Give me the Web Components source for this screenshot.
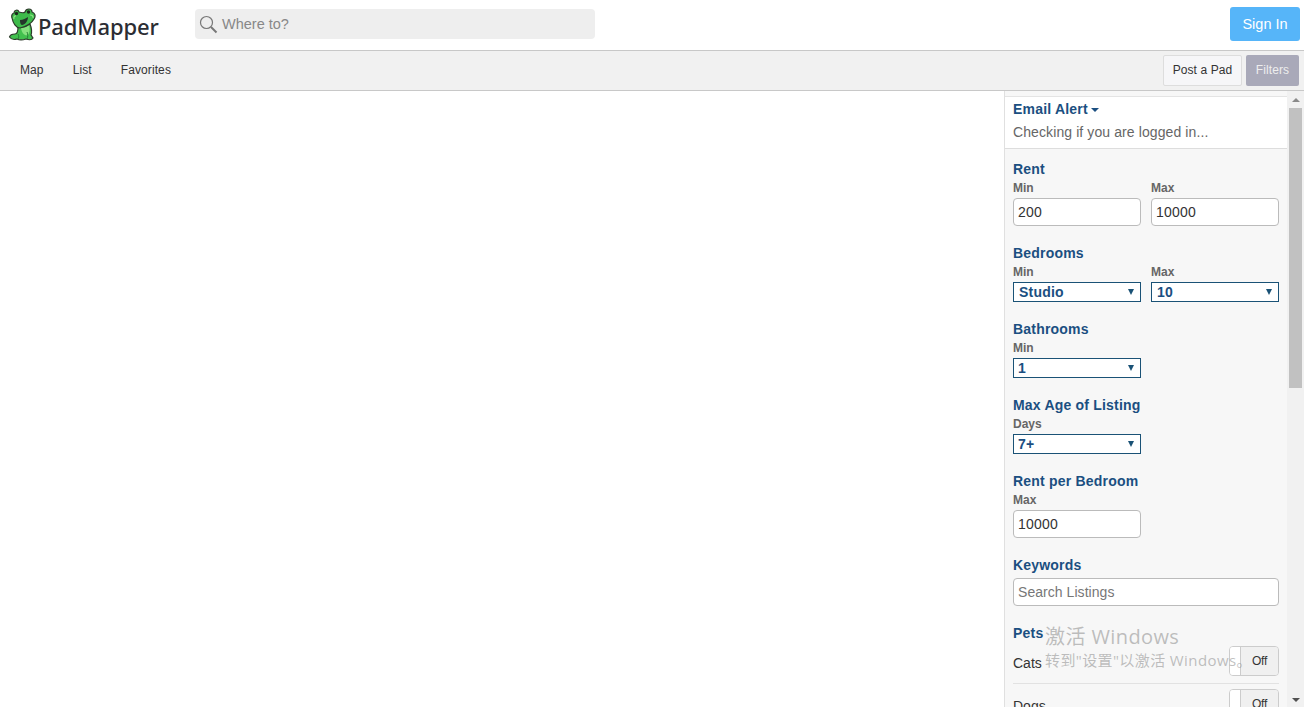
<!DOCTYPE html>
<html lang="en">
<head>
<meta charset="utf-8">
<title>PadMapper</title>
<style>
  html, body { margin: 0; height: 707px; overflow: hidden; background: #fff; font-family: "Liberation Sans", Arial, sans-serif; }
  body { display: flex; flex-direction: column; }
</style>
</head>
<body>
<pm-header></pm-header>
<pm-subnav></pm-subnav>
<pm-main>
  <pm-filters>
    <pm-alert></pm-alert>
    <pm-section heading="Rent">
      <pm-field label="Min"><pm-text value="200"></pm-text></pm-field>
      <pm-field label="Max"><pm-text value="10000"></pm-text></pm-field>
    </pm-section>
    <pm-section heading="Bedrooms">
      <pm-field label="Min"><pm-select value="Studio" wide></pm-select></pm-field>
      <pm-field label="Max"><pm-select value="10" wide></pm-select></pm-field>
    </pm-section>
    <pm-section heading="Bathrooms">
      <pm-field label="Min"><pm-select value="1"></pm-select></pm-field>
    </pm-section>
    <pm-section heading="Max Age of Listing">
      <pm-field label="Days"><pm-select value="7+"></pm-select></pm-field>
    </pm-section>
    <pm-section heading="Rent per Bedroom">
      <pm-field label="Max"><pm-text value="10000"></pm-text></pm-field>
    </pm-section>
    <pm-keywords></pm-keywords>
    <pm-pets></pm-pets>
  </pm-filters>
</pm-main>
<pm-watermark></pm-watermark>

<script>
function shadow(el, html) {
  el.attachShadow({ mode: "open" }).innerHTML = html;
}

class PmHeader extends HTMLElement {
  connectedCallback() {
    shadow(this, `
    <style>
      :host { display: flex; flex: none; height: 50px; align-items: center; background: #fff; border-bottom: 1px solid #c8c8c8; }
      .logo { display: flex; align-items: center; width: 195px; padding-left: 8px; box-sizing: border-box; height: 50px; }
      .logo svg { flex: none; margin-top: -1px; }
      .word { font: 500 22px/50px "Noto Sans", sans-serif; color: #2b2d33; margin: 1px 0 0 2px; letter-spacing: -.1px; }
      .search { display: flex; align-items: center; width: 400px; height: 30px; border-radius: 4px; background: #eee; box-sizing: border-box; padding-left: 4px; margin-top: -2px; }
      .search span { font-size: 14.5px; color: #888; margin-left: 4px; }
      .signin { margin: -3px 4px 0 auto; width: 70px; height: 34px; line-height: 34px; text-align: center; border-radius: 3px; background: #56b5f9; color: #fff; font-size: 14.5px; }
    </style>
    <div class="logo">
      <svg width="28" height="35" viewBox="0 0 28 35" aria-hidden="true">
        <path d="M10 20C10 25 9 27 7 27C5 27 2 28 1.500 30C3 32 6 33 9 32C11 33 15 33 18 32C21 33 24 33 25 31C24 30 24 29 23 28C24 25 24 22 22 17C18 20 14 21 10 20Z" fill="#42c04e" stroke="#2c3a2a" stroke-width="1.200" stroke-linejoin="round"/>
        <path d="M13 21C16 21 19 20 21 18C22 22 22 25 20 28C17 29 14 27 13 21Z" fill="#86e07e"/>
        <path d="M4 11C3 8 5 6 6 6C6 3 10 2 11 5C14 6 16 6 17 5C18 1 24 1 24 5C27 6 28 9 26 12C24 16 18 20 12 21C8 21 5 16 4 11Z" fill="#3dbb4a" stroke="#2c3a2a" stroke-width="1.200" stroke-linejoin="round"/>
        <path d="M12 13C15 13 18 11 20 10C20 14 17 18 14 18C12.500 18 12 15 12 13Z" fill="#25352a"/>
        <path d="M6 12C5.500 10 6.500 8.500 8 9M22 8C24 8 25.500 9 25 11" stroke="#8fe486" stroke-width="1.200" fill="none"/>
        <circle cx="8.500" cy="6.500" r="1.700" fill="#1d2a1c"/><circle cx="20.500" cy="5" r="1.700" fill="#1d2a1c"/>
        <path d="M10 27C11 29 11 31 10 32M19 25C20 27 20 30 19 32" stroke="#2a7d37" stroke-width="1" fill="none"/>
      </svg>
      <span class="word">PadMapper</span>
    </div>
    <div class="search">
      <svg width="19" height="19" viewBox="0 0 19 19" aria-hidden="true" fill="none" stroke="#777"><circle cx="7.500" cy="7.500" r="6" stroke-width="1.200"/><path d="M12 12l5.500 5.500" stroke-width="2"/></svg>
      <span>Where to?</span>
    </div>
    <div class="signin">Sign In</div>`);
  }
}

class PmSubnav extends HTMLElement {
  connectedCallback() {
    shadow(this, `
    <style>
      :host { display: flex; flex: none; align-items: center; background: #f1f1f1; border-bottom: 1px solid #c8c8c8; font-size: 12px; color: #333; padding: 0 5px 2px 20px; height: 37px; letter-spacing: .1px; }
      a { margin-right: 29px; }
      .post, .filters { height: 31px; margin-top: 2px; box-sizing: border-box; border-radius: 2px; text-align: center; }
      .post { margin-left: auto; width: 79px; line-height: 29px; background: #f6f6f8; border: 1px solid #ddd; }
      .filters { margin-left: 4px; width: 53px; line-height: 31px; background: #a9a9b9; color: #eee; }
    </style>
    <a>Map</a><a>List</a><a>Favorites</a>
    <div class="post">Post a Pad</div>
    <div class="filters">Filters</div>`);
  }
}

class PmMain extends HTMLElement {
  connectedCallback() {
    shadow(this, `
    <style>
      :host { display: flex; flex: 1; min-height: 0; justify-content: flex-end; background: #fff; }
      .scroll { display: flex; flex-direction: column; width: 17px; background: #f1f1f1; box-sizing: border-box; padding: 7px 2px 0; align-items: stretch; }
      .thumb { height: 280px; background: #c1c1c1; margin: 6px 0 auto; }
      .up, .down { width: 0; height: 0; align-self: center; border: 4px solid transparent; }
      .up { border-top: 0; border-bottom: 4px solid #8a8a8a; }
      .down { border-bottom: 0; border-top: 4px solid #505050; margin-bottom: 5px; }
    </style>
    <slot></slot>
    <div class="scroll"><div class="up"></div><div class="thumb"></div><div class="down"></div></div>`);
  }
}

class PmFilters extends HTMLElement {
  connectedCallback() {
    shadow(this, `
    <style>
      :host { display: block; width: 282px; background: #f7f7f7; border-left: 1px solid #e0e0e0; padding-top: 5px; overflow: hidden; }
    </style>
    <slot></slot>`);
  }
}

class PmAlert extends HTMLElement {
  connectedCallback() {
    shadow(this, `
    <style>
      :host { display: block; background: #fff; border-top: 1px solid #e4e4e4; border-bottom: 1px solid #ddd; height: 51px; padding: 0 8px; margin-bottom: 11px; }
      h3 { margin: 0; padding-top: 3px; font: bold 14px/18px "Liberation Sans", sans-serif; color: #1b4f81; letter-spacing: .2px; }
      i { display: inline-block; border: 4px solid transparent; border-bottom: 0; border-top-color: #1b4f81; vertical-align: 2px; margin-left: -1px; }
      p { margin: 5px 0 0; font-size: 14px; line-height: 18px; color: #666; letter-spacing: .1px; }
    </style>
    <h3>Email Alert <i></i></h3>
    <p>Checking if you are logged in...</p>`);
  }
}

class PmSection extends HTMLElement {
  connectedCallback() {
    shadow(this, `
    <style>
      :host { display: block; padding: 0 8px; margin-bottom: 18px; }
      h3 { margin: 0; font: bold 14px/18px "Liberation Sans", sans-serif; color: #1b4f81; letter-spacing: .2px; }
      .row { display: flex; gap: 10px; }
    </style>
    <h3>${this.getAttribute("heading")}</h3>
    <div class="row"><slot></slot></div>`);
  }
}

class PmField extends HTMLElement {
  connectedCallback() {
    shadow(this, `
    <style>
      :host { display: block; width: 128px; }
      label { display: block; font: bold 12px/15px "Liberation Sans", sans-serif; color: #666; margin: 3px 0 2px; }
    </style>
    <label>${this.getAttribute("label")}</label>
    <slot></slot>`);
  }
}

class PmText extends HTMLElement {
  connectedCallback() {
    shadow(this, `
    <style>
      :host { display: block; height: 28px; line-height: 26px; box-sizing: border-box; background: #fff; border: 1px solid #bbb; border-radius: 4px; padding-left: 4px; font-size: 14px; color: #333; letter-spacing: .2px; }
    </style>
    ${this.getAttribute("value")}`);
  }
}

class PmSelect extends HTMLElement {
  connectedCallback() {
    const pad = this.hasAttribute("wide") ? 5 : 4;
    shadow(this, `
    <style>
      :host { display: flex; align-items: center; justify-content: space-between; height: 20px; box-sizing: border-box; background: #fff; border: 1px solid #1a5276; padding: 0 6px 0 ${pad}px; font: bold 14px/18px "Liberation Sans", sans-serif; color: #1b4f81; letter-spacing: .2px; }
      i { border: 3px solid transparent; border-bottom: 0; border-top: 6px solid #1a5276; }
    </style>
    <span>${this.getAttribute("value")}</span><i></i>`);
  }
}

class PmKeywords extends HTMLElement {
  connectedCallback() {
    shadow(this, `
    <style>
      :host { display: block; padding: 0 8px; margin-bottom: 18px; }
      h3 { margin: 0 0 4px; font: bold 14px/18px "Liberation Sans", sans-serif; color: #1b4f81; letter-spacing: .2px; }
      div { height: 28px; line-height: 26px; box-sizing: border-box; background: #fff; border: 1px solid #bbb; border-radius: 4px; padding-left: 4px; font-size: 14px; color: #777; letter-spacing: .05px; }
    </style>
    <h3>Keywords</h3>
    <div>Search Listings</div>`);
  }
}

class PmPets extends HTMLElement {
  connectedCallback() {
    const row = (name) => `<div class="row"><span>${name}</span><div class="toggle"><b></b><em>Off</em></div></div>`;
    shadow(this, `
    <style>
      :host { display: block; padding: 0 8px; }
      h3 { margin: 0; font: bold 14px/18px "Liberation Sans", sans-serif; color: #1b4f81; letter-spacing: .2px; height: 22px; }
      .row { display: flex; justify-content: space-between; align-items: center; height: 30px; padding-bottom: 7px; margin-bottom: 5px; border-bottom: 1px solid #e2e2e2; font-size: 14px; color: #333; }
      .row span { margin-top: 4px; }
      .toggle { display: flex; width: 50px; height: 30px; box-sizing: border-box; border: 1px solid #ccc; border-radius: 4px; overflow: hidden; font-size: 12px; }
      b { width: 10px; background: #fff; border-right: 1px solid #ccc; }
      em { flex: 1; font-style: normal; text-align: center; line-height: 28px; background: #f0f0f0; color: #333; letter-spacing: -.3px; }
    </style>
    <h3>Pets</h3>
    ${row("Cats")}${row("Dogs")}`);
  }
}

class PmWatermark extends HTMLElement {
  connectedCallback() {
    shadow(this, `
    <style>
      :host { position: absolute; left: 1045px; top: 624px; color: rgba(130,130,130,.5); font-family: "Open Sans", "Noto Sans CJK SC", sans-serif; white-space: nowrap; pointer-events: none; }
      div { font-size: 20px; line-height: 26px; letter-spacing: .4px; }
      p { margin: 0; font-size: 15px; line-height: 20px; letter-spacing: .4px; }
    </style>
    <div>激活 Windows</div>
    <p>转到"设置"以激活 Windows。</p>`);
  }
}

customElements.define("pm-header", PmHeader);
customElements.define("pm-subnav", PmSubnav);
customElements.define("pm-main", PmMain);
customElements.define("pm-filters", PmFilters);
customElements.define("pm-alert", PmAlert);
customElements.define("pm-section", PmSection);
customElements.define("pm-field", PmField);
customElements.define("pm-text", PmText);
customElements.define("pm-select", PmSelect);
customElements.define("pm-keywords", PmKeywords);
customElements.define("pm-pets", PmPets);
customElements.define("pm-watermark", PmWatermark);
</script>
</body>
</html>
